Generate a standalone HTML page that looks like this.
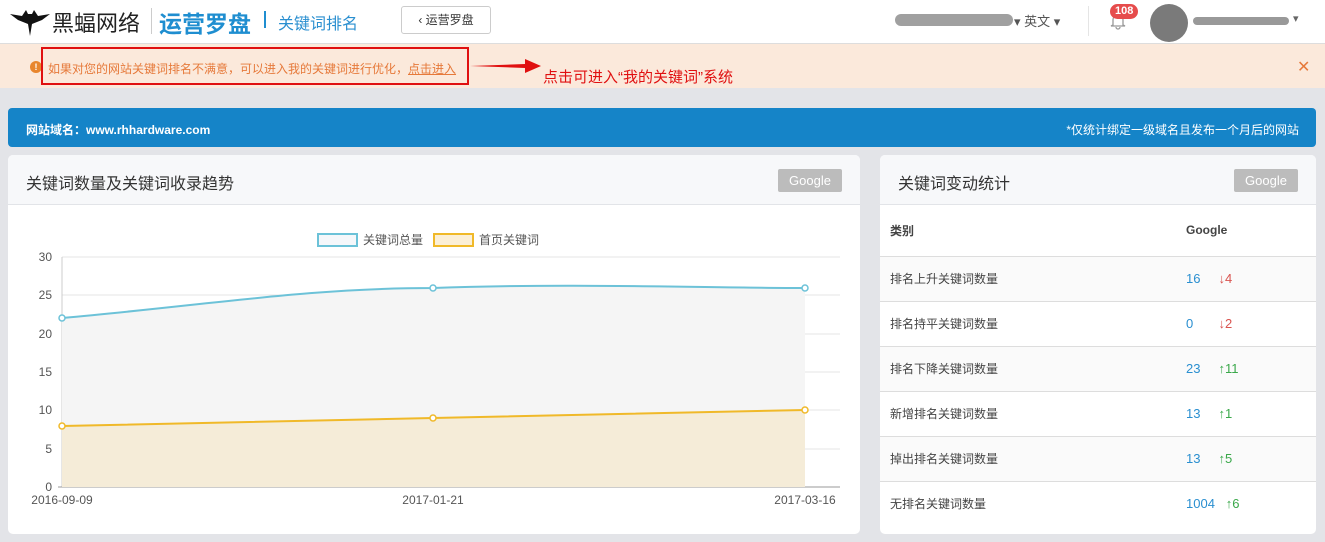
<!DOCTYPE html>
<html><head><meta charset="utf-8"><style>
*{margin:0;padding:0;box-sizing:border-box}
body{width:1325px;height:542px;background:#e3e4e8;font-family:"Liberation Sans","Noto Sans CJK SC",sans-serif;position:relative;overflow:hidden;color:#333}
.abs{position:absolute}
.top{left:0;top:0;width:1325px;height:44px;background:#fff;border-bottom:1px solid #ddd}
.notice{left:0;top:44px;width:1325px;height:44px;background:#fbe9db}
.card{background:#fff;border-radius:5px;overflow:hidden}
.hd{background:#f7f8fa;border-bottom:1px solid #e2e4e8;height:50px;font-size:16px;color:#333;padding:15px 18px}
.gbtn{position:absolute;background:#bcbcbc;color:#fff;font-size:13px;border-radius:2px;width:64px;height:23px;line-height:23px;text-align:center}
table{border-collapse:collapse;width:100%;font-size:12px}
td{height:45px;border-top:1px solid #ddd;padding-left:10px;color:#444}
td+td{font-size:13px}
.b{color:#2a8fd0}.r{color:#d9534f}.g{color:#3aa84a}
</style></head><body>
<div class="abs top">
 <svg class="abs" style="left:10px;top:8px" width="40" height="28" viewBox="0 0 40 28"><path d="M0 6 L12 8 L16 2 L18 6 L22 6 L24 2 L28 8 L40 6 L32 12 L22 16 L20 28 L18 16 L8 12Z" fill="#111"/></svg>
 <div class="abs" style="left:52px;top:6px;font-size:22px;color:#222">黑蝠网络</div>
 <div class="abs" style="left:151px;top:8px;width:1px;height:26px;background:#ccc"></div>
 <div class="abs" style="left:159px;top:5px;font-size:23px;color:#1f8ed0;font-weight:bold">运营罗盘</div>
 <div class="abs" style="left:264px;top:11px;width:2px;height:17px;background:#1f8ed0"></div>
 <div class="abs" style="left:278px;top:10px;font-size:16px;color:#2a8fd0">关键词排名</div>
 <div class="abs" style="left:401px;top:6px;width:90px;height:28px;border:1px solid #ccc;border-radius:3px;font-size:12px;line-height:26px;text-align:center">‹ 运营罗盘</div>
 <div class="abs" style="left:895px;top:14px;width:118px;height:12px;background:#888;border-radius:6px;opacity:.8"></div>
 <div class="abs" style="left:1014px;top:11px;font-size:13px;color:#555">▾ 英文 ▾</div>
 <div class="abs" style="left:1088px;top:6px;width:1px;height:30px;background:#e5e5e5"></div>
 <svg class="abs" style="left:1110px;top:12px" width="16" height="18"><path d="M3 13 L3 8 A5 5 0 0 1 13 8 L13 13 L15 14 L1 14Z M6 15 A2 2 0 0 0 10 15" fill="none" stroke="#999" stroke-width="1.3"/></svg>
 <div class="abs" style="left:1110px;top:4px;background:#e64c4c;color:#fff;font-size:11px;font-weight:bold;border-radius:8px;padding:0 5px;line-height:15px">108</div>
 <div class="abs" style="left:1150px;top:4px;width:38px;height:38px;border-radius:50%;background:#7a7a7a"></div>
 <div class="abs" style="left:1193px;top:17px;width:96px;height:8px;background:#999;border-radius:4px"></div>
 <div class="abs" style="left:1293px;top:12px;font-size:11px;color:#666">▾</div>
</div>
<div class="abs notice">
 <div class="abs" style="left:30px;top:17px;width:12px;height:12px;border-radius:50%;background:#e8862e;color:#fff;font-size:9px;text-align:center;line-height:12px;font-weight:bold">!</div>
 <div class="abs" style="left:41px;top:3px;width:428px;height:38px;border:2px solid #e01010"></div>
 <div class="abs" style="left:48px;top:16px;font-size:12px;color:#e6793a">如果对您的网站关键词排名不满意，可以进入我的关键词进行优化，<u>点击进入</u></div>
 <svg class="abs" style="left:470px;top:14px" width="72" height="16"><path d="M0 8 L55 6 L55 1 L71 8 L55 15 L55 10Z" fill="#e01010"/></svg>
 <div class="abs" style="left:543px;top:22px;font-size:15px;color:#e01010">点击可进入“我的关键词”系统</div>
 <div class="abs" style="left:1297px;top:13px;font-size:16px;color:#e6793a">✕</div>
</div>
<div class="abs" style="left:8px;top:108px;width:1308px;height:39px;background:#1584c8;border-radius:4px;color:#fff;font-size:12px">
 <div class="abs" style="left:18px;top:13px;font-weight:bold">网站域名：www.rhhardware.com</div>
 <div class="abs" style="right:17px;top:13px">*仅统计绑定一级域名且发布一个月后的网站</div>
</div>
<div class="abs card" style="left:8px;top:155px;width:852px;height:379px">
 <div class="hd">关键词数量及关键词收录趋势</div>
 <div class="gbtn" style="left:770px;top:14px">Google</div>
 <svg class="abs" style="left:0;top:0" width="852" height="379" font-family="Liberation Sans,Noto Sans CJK SC,sans-serif" font-size="12" fill="#555">
  <rect x="310" y="79" width="39" height="12" fill="#f5f7fa" stroke="#6cc2d8" stroke-width="2"/>
  <text x="355" y="89">关键词总量</text>
  <rect x="426" y="79" width="39" height="12" fill="#fbefd6" stroke="#f0b929" stroke-width="2"/>
  <text x="471" y="89">首页关键词</text>
  <g stroke="#e6e6e6">
   <line x1="54" y1="102" x2="832" y2="102"/><line x1="54" y1="140" x2="832" y2="140"/><line x1="54" y1="179" x2="832" y2="179"/><line x1="54" y1="217" x2="832" y2="217"/><line x1="54" y1="255" x2="832" y2="255"/><line x1="54" y1="294" x2="832" y2="294"/>
  </g>
  <line x1="54" y1="102" x2="54" y2="332" stroke="#ccc"/>
  <line x1="50" y1="332" x2="832" y2="332" stroke="#999"/>
  <path d="M54 163 C200 150 300 133 425 133 C560 128 700 133 797 133 L797 332 L54 332Z" fill="#f5f5f5"/>
  <path d="M54 271 L425 263 L797 255 L797 332 L54 332Z" fill="#f5ecd8"/>
  <path d="M54 163 C200 150 300 133 425 133 C560 128 700 133 797 133" fill="none" stroke="#6cc2d8" stroke-width="2"/>
  <path d="M54 271 L425 263 L797 255" fill="none" stroke="#f0b929" stroke-width="2"/>
  <g fill="#fff" stroke="#6cc2d8" stroke-width="1.5"><circle cx="54" cy="163" r="3"/><circle cx="425" cy="133" r="3"/><circle cx="797" cy="133" r="3"/></g>
  <g fill="#fff" stroke="#f0b929" stroke-width="1.5"><circle cx="54" cy="271" r="3"/><circle cx="425" cy="263" r="3"/><circle cx="797" cy="255" r="3"/></g>
  <g text-anchor="end"><text x="44" y="106">30</text><text x="44" y="144">25</text><text x="44" y="183">20</text><text x="44" y="221">15</text><text x="44" y="259">10</text><text x="44" y="298">5</text><text x="44" y="336">0</text></g>
  <text x="54" y="349" text-anchor="middle">2016-09-09</text><text x="425" y="349" text-anchor="middle">2017-01-21</text><text x="797" y="349" text-anchor="middle">2017-03-16</text>
 </svg>
</div>
<div class="abs card" style="left:880px;top:155px;width:436px;height:379px">
 <div class="hd">关键词变动统计</div>
 <div class="gbtn" style="left:354px;top:14px">Google</div>
 <table>
  <tr><td style="height:51px;border-top:none;font-weight:bold">类别</td><td style="border-top:none;font-weight:bold;width:140px;font-size:12px">Google</td></tr>
  <tr style="background:#fafafa"><td>排名上升关键词数量</td><td><span class="b">16</span>&nbsp;&nbsp;&nbsp;&nbsp;&nbsp;<span class="r">↓4</span></td></tr>
  <tr><td>排名持平关键词数量</td><td><span class="b">0</span>&nbsp;&nbsp;&nbsp;&nbsp;&nbsp;&nbsp;&nbsp;<span class="r">↓2</span></td></tr>
  <tr style="background:#fafafa"><td>排名下降关键词数量</td><td><span class="b">23</span>&nbsp;&nbsp;&nbsp;&nbsp;&nbsp;<span class="g">↑11</span></td></tr>
  <tr><td>新增排名关键词数量</td><td><span class="b">13</span>&nbsp;&nbsp;&nbsp;&nbsp;&nbsp;<span class="g">↑1</span></td></tr>
  <tr style="background:#fafafa"><td>掉出排名关键词数量</td><td><span class="b">13</span>&nbsp;&nbsp;&nbsp;&nbsp;&nbsp;<span class="g">↑5</span></td></tr>
  <tr><td>无排名关键词数量</td><td><span class="b">1004</span>&nbsp;&nbsp;&nbsp;<span class="g">↑6</span></td></tr>
 </table>
</div>
</body></html>
